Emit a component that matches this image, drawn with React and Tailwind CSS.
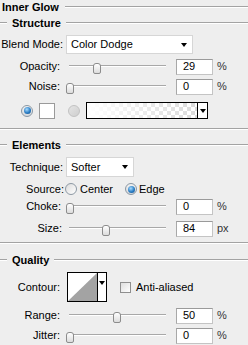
import React from "react";

const font = "font-['Liberation_Sans',Arial,sans-serif]";

function Line({ className = "" }) {
  return <div className={`h-[2px] border-t border-t-[#a3a3a3] border-b border-b-white ${className}`} />;
}

function SectionTitle({ title, className = "" }) {
  return (
    <div className={`flex h-[16px] items-center ${className}`}>
      <Line className="w-[7px]" />
      <span className="ml-[5px] font-bold">{title}</span>
      <Line className="ml-[5px] flex-1" />
    </div>
  );
}

function Label({ w, children }) {
  return (
    <div className="shrink-0 text-right" style={{ width: w }}>
      {children}
    </div>
  );
}

function Arrow() {
  return <div className="h-0 w-0 border-x-[3.5px] border-t-[4px] border-x-transparent border-t-black" />;
}

function Dropdown({ width, value }) {
  return (
    <div
      className="flex h-full items-center justify-between border border-[#d6d6d6] bg-white pl-[4px] pr-[5px]"
      style={{ width }}
    >
      <span>{value}</span>
      <Arrow />
    </div>
  );
}

function Slider({ pos }) {
  return (
    <div className="relative h-full w-[100px] shrink-0">
      <div className="absolute left-[3px] right-0 top-[7px] h-[2px] border-t border-t-[#a8a8a8] border-b border-b-white" />
      <div
        className="absolute top-[5px] h-[11px] w-[8px] rounded-[3px] rounded-b-[2px] border border-[#8c8c8c] bg-gradient-to-b from-white to-[#dcdcdc]"
        style={{ left: pos }}
      />
    </div>
  );
}

function NumInput({ value }) {
  return (
    <div className="flex h-[16px] w-[37px] shrink-0 items-center border border-[#c4c4c4] border-t-[#9a9a9a] border-l-[#a8a8a8] bg-white pl-[6px]">
      {value}
    </div>
  );
}

function SliderRow({ label, lw, pos, value, unit, className = "" }) {
  return (
    <div className={`flex h-[17px] items-center ${className}`}>
      <Label w={lw}>{label}</Label>
      <div className="h-full" style={{ marginLeft: 66 - lw }}>
        <Slider pos={pos} />
      </div>
      <div className="ml-[10px]">
        <NumInput value={value} />
      </div>
      <span className="ml-[4px] text-[#333]">{unit}</span>
    </div>
  );
}

function Radio({ on, dim }) {
  if (on) {
    return (
      <div className="flex h-[12px] w-[12px] shrink-0 items-center justify-center rounded-full border border-[#8a97a3] bg-gradient-to-b from-[#f2f2f2] to-[#d5d9dd]">
        <div className="h-[7px] w-[7px] rounded-full bg-[radial-gradient(circle_at_40%_35%,#a8dcff,#2a7dc4_55%,#0c4a86)]" />
      </div>
    );
  }
  return (
    <div
      className={`h-[12px] w-[12px] shrink-0 rounded-full border ${
        dim
          ? "border-[#c2c2c2] bg-gradient-to-br from-[#e4e4e4] to-[#cfcfcf]"
          : "border-[#8d99a4] bg-gradient-to-br from-[#dcdcdc] to-white"
      }`}
    />
  );
}

function GradientPreview() {
  return (
    <div className="flex h-[17px] w-[122px] border border-black bg-white">
      <svg className="h-full flex-1" viewBox="0 0 110 15" preserveAspectRatio="none">
        <defs>
          <pattern id="chk" width="8" height="8" patternUnits="userSpaceOnUse">
            <rect width="8" height="8" fill="#ffffff" />
            <rect width="4" height="4" fill="#d4d4d4" />
            <rect x="4" y="4" width="4" height="4" fill="#d4d4d4" />
          </pattern>
          <linearGradient id="fade" x1="0" x2="1" y1="0" y2="0">
            <stop offset="0" stopColor="#fff" stopOpacity="1" />
            <stop offset="1" stopColor="#fff" stopOpacity="0.15" />
          </linearGradient>
        </defs>
        <rect width="110" height="15" fill="url(#chk)" />
        <rect width="110" height="15" fill="url(#fade)" />
      </svg>
      <div className="flex w-[10px] items-center justify-center border-l border-black bg-white">
        <Arrow />
      </div>
    </div>
  );
}

function Contour() {
  return (
    <div className="flex h-[30px] w-[40px] border border-black bg-white">
      <svg className="h-full w-[29px]" viewBox="0 0 29 28">
        <rect width="29" height="28" fill="#fff" />
        <polygon points="0,28 29,0 29,28" fill="#a3a3a3" />
      </svg>
      <div className="flex flex-1 items-start justify-center border-l border-black pt-[8px]">
        <Arrow />
      </div>
    </div>
  );
}

export default function App() {
  return (
    <div className={`h-[345px] w-[248px] overflow-hidden bg-[#eeeeee] text-[11px] leading-none text-black ${font}`}>
      {/* Inner Glow */}
      <div className="flex h-[14px] items-center pl-[2px]">
        <span className="font-bold">Inner Glow</span>
        <Line className="ml-[6px] flex-1" />
      </div>

      {/* Structure */}
      <SectionTitle title="Structure" className="mt-[1px]" />
      <div className="mt-[4px] flex h-[19px] items-center">
        <Label w={63}>Blend Mode:</Label>
        <div className="ml-[3px] h-full">
          <Dropdown width={127} value="Color Dodge" />
        </div>
      </div>
      <SliderRow label="Opacity:" lw={60} pos={27} value="29" unit="%" className="mt-[4px]" />
      <SliderRow label="Noise:" lw={60} pos={0} value="0" unit="%" className="mt-[3px]" />
      <div className="mt-[7px] flex h-[17px] items-center pl-[21px]">
        <Radio on />
        <div className="ml-[6px] h-[16px] w-[16px] border border-[#9a9a9a] bg-white" />
        <div className="ml-[13px]">
          <Radio dim />
        </div>
        <div className="ml-[6px]">
          <GradientPreview />
        </div>
      </div>
      <Line className="mt-[9px]" />

      {/* Elements */}
      <SectionTitle title="Elements" className="mt-[7px]" />
      <div className="mt-[4px] flex h-[20px] items-center">
        <Label w={63}>Technique:</Label>
        <div className="ml-[3px] h-full">
          <Dropdown width={68} value="Softer" />
        </div>
      </div>
      <div className="mt-[4px] flex h-[16px] items-center">
        <Label w={64}>Source:</Label>
        <div className="ml-[1px] flex w-[60px] items-center">
          <Radio />
          <span className="ml-[3px]">Center</span>
        </div>
        <Radio on />
        <span className="ml-[2px]">Edge</span>
      </div>
      <SliderRow label="Choke:" lw={61} pos={0} value="0" unit="%" className="mt-[1px]" />
      <SliderRow label="Size:" lw={62} pos={36} value="84" unit="px" className="mt-[5px]" />
      <Line className="mt-[5px]" />

      {/* Quality */}
      <SectionTitle title="Quality" className="mt-[8px]" />
      <div className="mt-[4px] flex h-[30px] items-center">
        <Label w={60}>Contour:</Label>
        <div className="ml-[7px]">
          <Contour />
        </div>
        <div className="ml-[13px] h-[11px] w-[11px] border border-[#8f8f8f] bg-gradient-to-br from-[#dedede] to-white" />
        <span className="ml-[5px]">Anti-aliased</span>
      </div>
      <SliderRow label="Range:" lw={60} pos={47} value="50" unit="%" className="mt-[5px]" />
      <SliderRow label="Jitter:" lw={60} pos={0} value="0" unit="%" className="mt-[3px]" />
    </div>
  );
}
